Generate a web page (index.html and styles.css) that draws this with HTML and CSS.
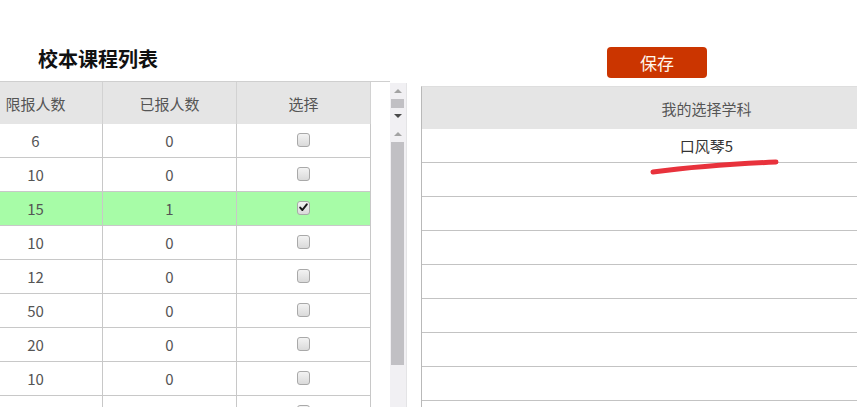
FILE: index.html
```html
<!DOCTYPE html>
<html lang="zh">
<head>
<meta charset="utf-8">
<title>校本课程列表</title>
<link rel="stylesheet" href="styles.css">
</head>
<body>
<div class="page">
  <section class="left">
    <h2 class="title">校本课程列表</h2>
    <div class="listbox">
      <div class="viewport">
        <div class="grid">
          <div class="cell head">限报人数</div>
          <div class="cell head">已报人数</div>
          <div class="cell head">选择</div>

          <div class="cell">6</div><div class="cell">0</div><div class="cell"><span class="cb"></span></div>
          <div class="cell">10</div><div class="cell">0</div><div class="cell"><span class="cb"></span></div>
          <div class="cell sel">15</div><div class="cell sel">1</div><div class="cell sel"><span class="cb checked"><svg viewBox="0 0 11 11" width="11" height="11"><path d="M2.2 5.6 L4.4 8 L8.8 2.4" fill="none" stroke="#1a1a1a" stroke-width="2" stroke-linecap="round" stroke-linejoin="round"/></svg></span></div>
          <div class="cell">10</div><div class="cell">0</div><div class="cell"><span class="cb"></span></div>
          <div class="cell">12</div><div class="cell">0</div><div class="cell"><span class="cb"></span></div>
          <div class="cell">50</div><div class="cell">0</div><div class="cell"><span class="cb"></span></div>
          <div class="cell">20</div><div class="cell">0</div><div class="cell"><span class="cb"></span></div>
          <div class="cell">10</div><div class="cell">0</div><div class="cell"><span class="cb"></span></div>
          <div class="cell"></div><div class="cell"></div><div class="cell"><span class="cb"></span></div>
        </div>
      </div>
      <div class="scrollbar">
        <div class="arrow"><span class="tri-up"></span></div>
        <div class="thumb small"></div>
        <div class="arrow"><span class="tri-down"></span></div>
        <div class="spacer"></div>
        <div class="arrow"><span class="tri-up"></span></div>
        <div class="thumb big"></div>
      </div>
    </div>
  </section>

  <section class="right">
    <button class="save">保存</button>
    <div class="mytable">
      <div class="mhead">我的选择学科</div>
      <div class="mrow first">口风琴5
        <svg class="scribble" viewBox="0 0 140 24" width="140" height="24"><path d="M7 17 Q60 10 130 7" fill="none" stroke="#e8323c" stroke-width="5" stroke-linecap="round"/></svg>
      </div>
      <div class="mrow"></div>
      <div class="mrow"></div>
      <div class="mrow"></div>
      <div class="mrow"></div>
      <div class="mrow"></div>
      <div class="mrow"></div>
      <div class="mrow"></div>
    </div>
  </section>
</div>
</body>
</html>
```

FILE: styles.css
```css
html, body {
  margin: 0;
  padding: 0;
  width: 857px;
  height: 407px;
  overflow: hidden;
  background: #fff;
}

body {
  font-family: "Noto Sans CJK SC", "Noto Sans", sans-serif;
  color: #555;
}

.page {
  display: flex;
  gap: 14px;
  height: 407px;
}

.left {
  width: 407px;
  flex: none;
  display: flex;
  flex-direction: column;
}

.title {
  margin: 0;
  height: 81px;
  box-sizing: border-box;
  padding: 46px 0 0 38px;
  font-size: 20px;
  line-height: 26px;
  font-weight: bold;
  color: #111;
}

.listbox {
  display: flex;
  flex: 1;
  min-height: 0;
}

.viewport {
  width: 390px;
  overflow: hidden;
  flex: none;
}

.grid {
  display: grid;
  grid-template-columns: repeat(3, 134px);
  margin-left: -31px;
  border-top: 1px solid #cfcfcf;
}

.cell {
  box-sizing: border-box;
  height: 34px;
  border-right: 1px solid #c8c8c8;
  border-bottom: 1px solid #c8c8c8;
  display: flex;
  align-items: center;
  justify-content: center;
  font-size: 15px;
  color: #555;
}

.cell.head {
  height: 42px;
  border-bottom: none;
  border-right-color: #d2d2d2;
  background: #e5e5e5;
  color: #555;
}

.cell.sel {
  background: #a7fca7;
}

.cb {
  width: 13px;
  height: 14px;
  box-sizing: border-box;
  border: 1px solid #a9a9a9;
  border-radius: 3px;
  background: linear-gradient(#f3f3f3, #dadada);
  display: flex;
  align-items: center;
  justify-content: center;
  margin-top: -2px;
}

.cb svg {
  display: block;
}

.scrollbar {
  width: 17px;
  flex: none;
  margin-top: 2px;
  background: #f1f0f3;
  border-right: 1px solid #e4e4e6;
  box-sizing: border-box;
  display: flex;
  flex-direction: column;
  align-items: center;
}

.arrow {
  height: 16px;
  width: 100%;
  display: flex;
  align-items: center;
  justify-content: center;
}

.tri-up {
  width: 0;
  height: 0;
  border-left: 4px solid transparent;
  border-right: 4px solid transparent;
  border-bottom: 4px solid #a3a3a3;
}

.tri-down {
  width: 0;
  height: 0;
  border-left: 4px solid transparent;
  border-right: 4px solid transparent;
  border-top: 4px solid #4a4a4a;
}

.thumb {
  width: 13px;
  margin-left: -1px;
  background: #c1c0c4;
}

.thumb.small {
  height: 9px;
}

.thumb.big {
  height: 223px;
}

.spacer {
  height: 2px;
}

.right {
  flex: none;
  width: 570px;
  padding-top: 47px;
  display: flex;
  flex-direction: column;
  align-items: flex-start;
}

.save {
  margin: 0 0 8px 186px;
  width: 100px;
  height: 31px;
  border: none;
  border-radius: 4px;
  background: #cb3500;
  color: #fff6ec;
  font-family: "Noto Sans CJK SC", sans-serif;
  font-size: 17px;
  padding: 0;
  line-height: 31px;
}

.mytable {
  width: 570px;
  flex: 1;
  border-left: 1px solid #b9b9b9;
  border-top: 1px solid #dedede;
  box-sizing: border-box;
}

.mhead {
  height: 42px;
  background: #e5e5e5;
  display: flex;
  align-items: center;
  justify-content: center;
  font-size: 15px;
  color: #555;
}

.mrow {
  position: relative;
  box-sizing: border-box;
  height: 34px;
  border-bottom: 1px solid #c3c3c3;
  display: flex;
  align-items: center;
  justify-content: center;
  font-size: 15px;
  color: #333;
  padding-bottom: 1px;
}

.scribble {
  position: absolute;
  left: 224px;
  top: 26px;
  overflow: visible;
}
```
